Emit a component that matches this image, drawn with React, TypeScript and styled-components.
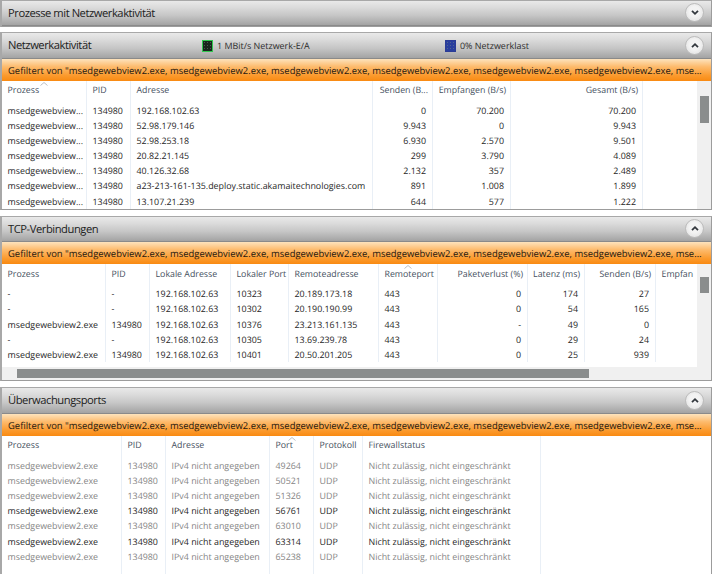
import React from "react";
import styled, { createGlobalStyle } from "styled-components";

const Global = createGlobalStyle`
  html, body { margin: 0; padding: 0; background: #fff; overflow: hidden; }
  body {
    font-family: "Open Sans", Roboto, "Liberation Sans", sans-serif;
    text-rendering: geometricPrecision;
  }
`;

const Page = styled.div`
  width: 712px;
  height: 574px;
  display: flex;
  flex-direction: column;
  overflow: hidden;
  background: #fff;
`;

const Panel = styled.section<{ $h: number; $mt: number }>`
  height: ${(p) => p.$h}px;
  margin-top: ${(p) => p.$mt}px;
  flex: none;
  display: flex;
  flex-direction: column;
  box-sizing: border-box;
  border-style: solid;
  border-width: 1px 1px 1px 2px;
  border-color: #a8a8a8 #9c9c9c #9c9c9c #a8a8a8;
  overflow: hidden;
`;

const Header = styled.header<{ $h: number }>`
  height: ${(p) => p.$h}px;
  flex: none;
  display: flex;
  align-items: center;
  position: relative;
  padding-left: 6px;
  box-sizing: border-box;
  background: linear-gradient(#e9e9e9 0%, #dcdcdc 25%, #c6c6c6 60%, #a3a3a3 100%);
  border-bottom: 1px solid #8a8a8a;
`;

const Title = styled.h2`
  margin: 0;
  font-size: 11.2px;
  font-weight: 400;
  letter-spacing: -0.45px;
  color: #222;
  font-family: "Open Sans", Roboto, sans-serif;
`;

const Metric = styled.div<{ $left: number }>`
  position: absolute;
  left: ${(p) => p.$left}px;
  top: 6px;
  display: flex;
  align-items: center;
  gap: 4px;
  font-size: 8.95px;
  color: #2c2c2c;
`;

const Swatch = styled.span<{ $kind: "io" | "load" }>`
  width: 11px;
  height: 12px;
  box-sizing: border-box;
  display: block;
  background-color: ${(p) => (p.$kind === "io" ? "#18251c" : "#2a3f9e")};
  border: 1px solid ${(p) => (p.$kind === "io" ? "#32c650" : "#2b3c96")};
  background-image: radial-gradient(rgba(120, 140, 130, 0.5) 30%, transparent 35%);
  background-size: 3px 3px;
`;

const Toggle = styled.button`
  position: absolute;
  right: 7px;
  top: 50%;
  margin-top: -10px;
  width: 19px;
  height: 19px;
  padding: 0;
  border-radius: 50%;
  border: 1px solid #bcbcbc;
  background: radial-gradient(circle at 50% 45%, #f3f3f3 40%, #dcdcdc 100%);
  display: flex;
  align-items: center;
  justify-content: center;
`;

const Filter = styled.div`
  height: 22px;
  flex: none;
  box-sizing: border-box;
  padding: 0 6px;
  display: flex;
  align-items: center;
  background: linear-gradient(#fde3bd 0%, #fdbb6d 35%, #fb9a2d 75%, #f98a12 100%);
  font-size: 9.45px;
  color: #1f1810;
  white-space: nowrap;
  overflow: hidden;
`;

const FilterText = styled.span`
  display: block;
  width: 100%;
  overflow: hidden;
  text-overflow: ellipsis;
`;

const Body = styled.div`
  flex: 1;
  min-height: 0;
  display: flex;
  overflow: hidden;
`;

const TableWrap = styled.div`
  flex: 1;
  min-width: 0;
  overflow: hidden;
  display: flex;
  flex-direction: column;
`;

const Grid = styled.div<{ $cols: string }>`
  display: grid;
  grid-template-columns: ${(p) => p.$cols};
  flex: 1;
  min-height: 0;
  align-content: start;
`;

const HeadCell = styled.div<{ $right?: boolean; $h: number; $line: boolean; $pb: number }>`
  height: ${(p) => p.$h}px;
  box-sizing: border-box;
  padding: ${(p) => (p.$right ? `0 4px ${p.$pb}px 0` : `0 0 ${p.$pb}px 5.5px`)};
  display: flex;
  align-items: center;
  justify-content: ${(p) => (p.$right ? "flex-end" : "flex-start")};
  font-size: 8.8px;
  color: #45505e;
  white-space: nowrap;
  overflow: hidden;
  position: relative;
  border-right: ${(p) => (p.$line ? "1px solid #e9eff6" : "0")};
`;

const Caret = styled.svg`
  position: absolute;
  top: 1px;
  left: 50%;
  margin-left: -4px;
`;

const Cell = styled.div<{ $right?: boolean; $muted?: boolean; $line: boolean; $tall?: boolean }>`
  height: ${(p) => (p.$tall ? 40 : 15.2)}px;
  line-height: 15.2px;
  box-sizing: border-box;
  padding: ${(p) => (p.$right ? "0 6px 0 0" : "0 0 0 5.5px")};
  text-align: ${(p) => (p.$right ? "right" : "left")};
  font-size: 8.9px;
  color: ${(p) => (p.$muted ? "#858585" : "#262626")};
  white-space: nowrap;
  overflow: hidden;
  text-overflow: ellipsis;
  border-right: ${(p) => (p.$line ? "1px solid #e9eff6" : "0")};
`;

const Track = styled.div<{ $pad: number }>`
  width: 14px;
  flex: none;
  background: #f0f0f0;
  padding-top: ${(p) => p.$pad}px;
  display: flex;
  justify-content: center;
  box-sizing: border-box;
`;

const Thumb = styled.div<{ $h: number }>`
  width: 9px;
  height: ${(p) => p.$h}px;
  background: #8a8d8d;
`;

const HBar = styled.div`
  height: 13px;
  flex: none;
  background: #f0f0f0;
  padding: 2px 0 0 15px;
  box-sizing: border-box;
`;

const HThumb = styled.div`
  width: 572px;
  height: 9px;
  background: #8a8d8d;
`;

const Chevron = ({ up }: { up?: boolean }) => (
  <svg width="10" height="7" viewBox="0 0 10 7">
    <path
      d={up ? "M2 5.2 L5 2.2 L8 5.2" : "M2 1.8 L5 4.8 L8 1.8"}
      fill="none"
      stroke="#33383e"
      strokeWidth="1.8"
    />
  </svg>
);

type Col = { label: string; w: number; right?: boolean; sorted?: boolean; line?: boolean };

const DataTable = ({
  cols,
  rows,
  headH,
  headPad,
  muted,
  filler,
}: {
  cols: Col[];
  rows: string[][];
  headH: number;
  headPad: number;
  muted?: boolean[];
  filler?: boolean;
}) => (
  <Grid $cols={cols.map((c) => `${c.w}px`).join(" ")}>
    {cols.map((c) => (
      <HeadCell key={c.label || "x"} $right={c.right} $h={headH} $pb={headPad} $line={c.line !== false}>
        {c.sorted && (
          <Caret width="8" height="4" viewBox="0 0 8 4">
            <path d="M0.5 3.5 L4 0.5 L7.5 3.5" fill="none" stroke="#a9b0b8" strokeWidth="0.8" />
          </Caret>
        )}
        {c.label}
      </HeadCell>
    ))}
    {rows.map((r, i) =>
      r.map((v, j) => (
        <Cell key={`${i}-${j}`} $right={cols[j].right} $muted={muted?.[i]} $line={cols[j].line !== false}>
          {v}
        </Cell>
      )),
    )}
    {filler && cols.map((c) => <Cell key={`f-${c.label}`} $tall $line={c.line !== false} />)}
  </Grid>
);

const FILTER =
  'Gefiltert von "msedgewebview2.exe, msedgewebview2.exe, msedgewebview2.exe, msedgewebview2.exe, msedgewebview2.exe, msedgewebview2.exe, msedgewebview2.exe, msedgewebview2.exe, msedgewebview2.exe';

const P = "msedgewebview2.exe";
const PS = "msedgewebview...";
const IP = "192.168.102.63";

const netCols: Col[] = [
  { label: "Prozess", w: 85, sorted: true },
  { label: "PID", w: 44 },
  { label: "Adresse", w: 242 },
  { label: "Senden (B...", w: 60, right: true },
  { label: "Empfangen (B/s)", w: 78, right: true },
  { label: "Gesamt (B/s)", w: 132, right: true },
  { label: "", w: 54, line: false },
];
const netRows = [
  [PS, "134980", IP, "0", "70.200", "70.200", ""],
  [PS, "134980", "52.98.179.146", "9.943", "0", "9.943", ""],
  [PS, "134980", "52.98.253.18", "6.930", "2.570", "9.501", ""],
  [PS, "134980", "20.82.21.145", "299", "3.790", "4.089", ""],
  [PS, "134980", "40.126.32.68", "2.132", "357", "2.489", ""],
  [PS, "134980", "a23-213-161-135.deploy.static.akamaitechnologies.com", "891", "1.008", "1.899", ""],
  [PS, "134980", "13.107.21.239", "644", "577", "1.222", ""],
];

const tcpCols: Col[] = [
  { label: "Prozess", w: 104 },
  { label: "PID", w: 44 },
  { label: "Lokale Adresse", w: 81 },
  { label: "Lokaler Port", w: 58 },
  { label: "Remoteadresse", w: 90 },
  { label: "Remoteport", w: 59, sorted: true },
  { label: "Paketverlust (%)", w: 90, right: true },
  { label: "Latenz (ms)", w: 57, right: true },
  { label: "Senden (B/s)", w: 71, right: true },
  { label: "Empfan", w: 41, line: false },
];
const tcpRows = [
  ["-", "-", IP, "10323", "20.189.173.18", "443", "0", "174", "27", ""],
  ["-", "-", IP, "10302", "20.190.190.99", "443", "0", "54", "165", ""],
  [P, "134980", IP, "10376", "23.213.161.135", "443", "-", "49", "0", ""],
  ["-", "-", IP, "10305", "13.69.239.78", "443", "0", "29", "24", ""],
  [P, "134980", IP, "10401", "20.50.201.205", "443", "0", "25", "939", ""],
];

const portCols: Col[] = [
  { label: "Prozess", w: 120 },
  { label: "PID", w: 44 },
  { label: "Adresse", w: 104 },
  { label: "Port", w: 44, sorted: true },
  { label: "Protokoll", w: 49 },
  { label: "Firewallstatus", w: 178 },
];
const NA = "IPv4 nicht angegeben";
const FW = "Nicht zulässig, nicht eingeschränkt";
const ports = ["49264", "50521", "51326", "56761", "63010", "63314", "65238"];
const portRows = ports.map((p) => [P, "134980", NA, p, "UDP", FW]);
const portMuted = [true, true, true, false, true, false, true];

export default function App() {
  return (
    <Page>
      <Global />
      <Panel $h={27} $mt={0}>
        <Header $h={25}>
          <Title>Prozesse mit Netzwerkaktivität</Title>
          <Toggle aria-label="Einblenden">
            <Chevron />
          </Toggle>
        </Header>
      </Panel>

      <Panel $h={178} $mt={5}>
        <Header $h={26}>
          <Title>Netzwerkaktivität</Title>
          <Metric $left={200}>
            <Swatch $kind="io" />1 MBit/s Netzwerk-E/A
          </Metric>
          <Metric $left={443}>
            <Swatch $kind="load" />0% Netzwerklast
          </Metric>
          <Toggle aria-label="Ausblenden">
            <Chevron up />
          </Toggle>
        </Header>
        <Filter>
          <FilterText>{FILTER}</FilterText>
        </Filter>
        <Body>
          <TableWrap>
            <DataTable cols={netCols} rows={netRows} headH={21.5} headPad={3.5} />
          </TableWrap>
          <Track $pad={15}>
            <Thumb $h={27} />
          </Track>
        </Body>
      </Panel>

      <Panel $h={165} $mt={6}>
        <Header $h={25}>
          <Title>TCP-Verbindungen</Title>
          <Toggle aria-label="Ausblenden">
            <Chevron up />
          </Toggle>
        </Header>
        <Filter>
          <FilterText>{FILTER}</FilterText>
        </Filter>
        <Body>
          <TableWrap>
            <DataTable cols={tcpCols} rows={tcpRows} headH={22.2} headPad={3.2} />
            <HBar>
              <HThumb />
            </HBar>
          </TableWrap>
          <Track $pad={13}>
            <Thumb $h={16} />
          </Track>
        </Body>
      </Panel>

      <Panel $h={190} $mt={6}>
        <Header $h={26}>
          <Title>Überwachungsports</Title>
          <Toggle aria-label="Ausblenden">
            <Chevron up />
          </Toggle>
        </Header>
        <Filter>
          <FilterText>{FILTER}</FilterText>
        </Filter>
        <Body>
          <TableWrap>
            <DataTable cols={portCols} rows={portRows} headH={21.7} headPad={4} muted={portMuted} filler />
          </TableWrap>
        </Body>
      </Panel>
    </Page>
  );
}
